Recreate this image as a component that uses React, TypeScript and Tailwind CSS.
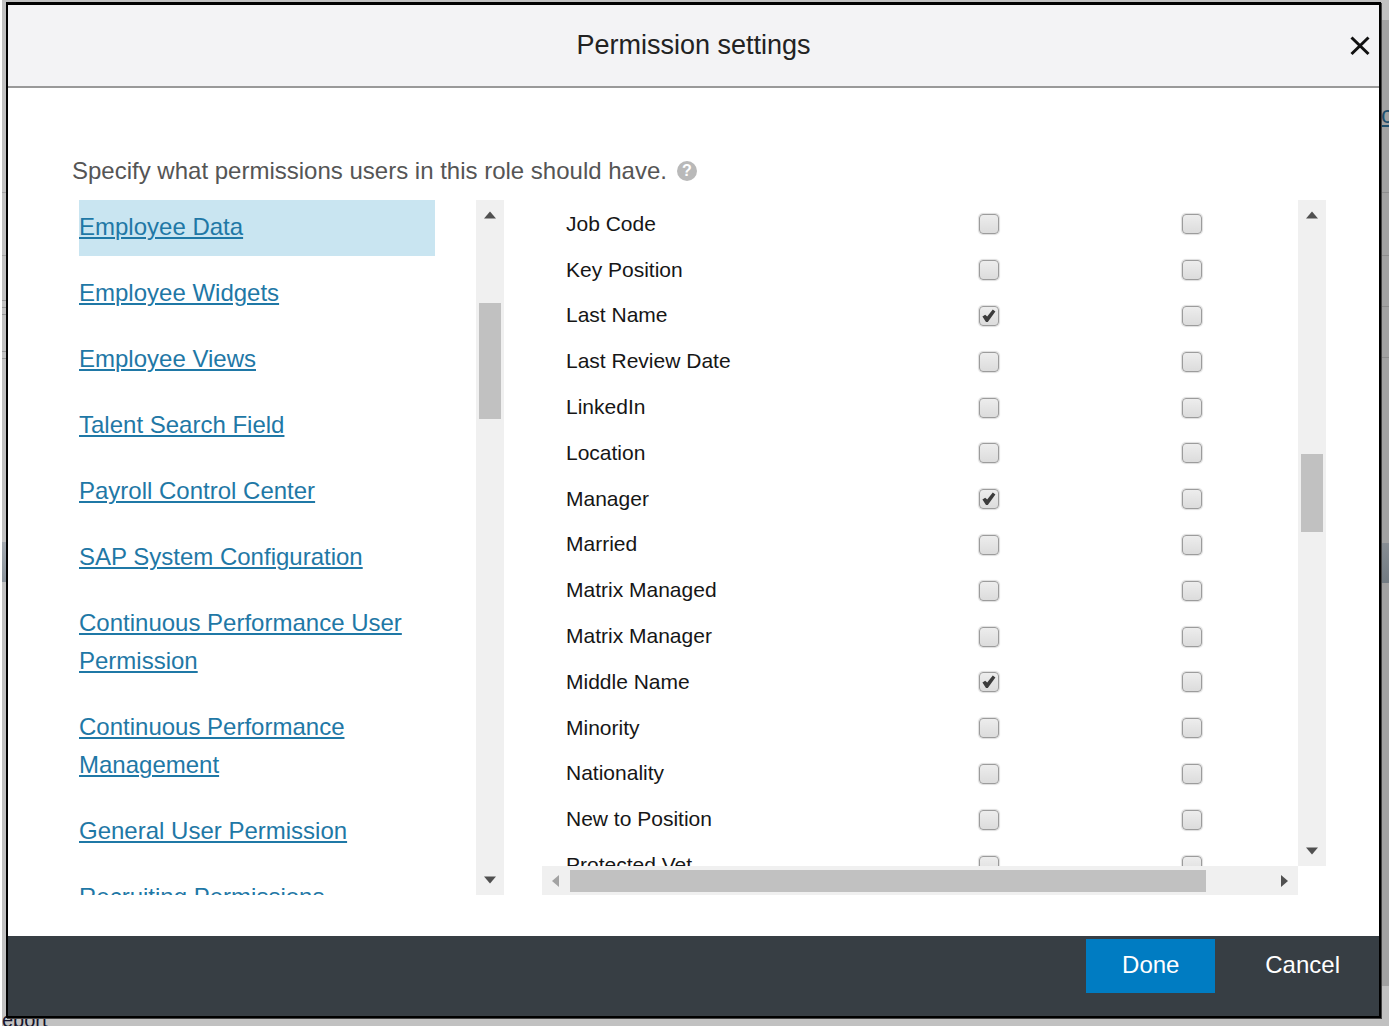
import { useState } from "react";

const categories = [
  "Employee Data",
  "Employee Widgets",
  "Employee Views",
  "Talent Search Field",
  "Payroll Control Center",
  "SAP System Configuration",
  "Continuous Performance User Permission",
  "Continuous Performance Management",
  "General User Permission",
  "Recruiting Permissions",
];

const fields = [
  { name: "Job Code", view: false },
  { name: "Key Position", view: false },
  { name: "Last Name", view: true },
  { name: "Last Review Date", view: false },
  { name: "LinkedIn", view: false },
  { name: "Location", view: false },
  { name: "Manager", view: true },
  { name: "Married", view: false },
  { name: "Matrix Managed", view: false },
  { name: "Matrix Manager", view: false },
  { name: "Middle Name", view: true },
  { name: "Minority", view: false },
  { name: "Nationality", view: false },
  { name: "New to Position", view: false },
  { name: "Protected Vet", view: false },
];

const arrowPaths = {
  up: "M8 5.5 14 12.5H2Z",
  down: "M2 3.5H14L8 10.5Z",
  left: "M11 2V14L4 8Z",
  right: "M5 2V14L12 8Z",
};

function ScrollArrow({ dir, muted = false }: { dir: keyof typeof arrowPaths; muted?: boolean }) {
  return (
    <button type="button" aria-label={`Scroll ${dir}`} className="grid size-7 shrink-0 place-items-center">
      <svg viewBox="0 0 16 16" className="size-4" fill={muted ? "#a3a3a3" : "#505050"}>
        <path d={arrowPaths[dir]} />
      </svg>
    </button>
  );
}

function CheckBox({ label, initial }: { label: string; initial: boolean }) {
  const [checked, setChecked] = useState(initial);
  return (
    <span className="relative inline-block size-5 align-middle">
      <input
        type="checkbox"
        aria-label={label}
        checked={checked}
        onChange={(e) => setChecked(e.target.checked)}
        className="block size-5 appearance-none rounded-[4px] border border-[#9c9c9c] bg-linear-to-b from-[#ededed] to-[#dcdcdc] shadow-[0_0_1px_1px_#00000022]"
      />
      {checked && (
        <svg viewBox="0 0 20 20" className="pointer-events-none absolute inset-0 size-5" fill="#3c3c3c">
          <path d="M3.4 10.6 6.2 8.8 8.2 10.6 13.8 3.6 16.4 5.4 8.8 16 7 16Z" />
        </svg>
      )}
    </span>
  );
}

function Backdrop() {
  return (
    <div aria-hidden="true" className="flex h-full border-l-2 border-white bg-[#c1c1c1]">
      <div className="flex w-4 flex-col">
        <div className="mt-48 h-px bg-[#a5a5a5]" />
        <div className="mt-[62px] h-px bg-[#a5a5a5]" />
        <div className="mt-11 h-px bg-[#999999]" />
        <div className="mt-1.5 h-px bg-[#999999]" />
        <div className="mt-1.5 h-px bg-[#999999]" />
        <div className="mt-9 h-px bg-[#999999]" />
        <div className="mt-1.5 h-px bg-[#999999]" />
        <div className="mt-[183px] h-10 bg-linear-to-b from-[#a3a9b0] to-[#8b949c]" />
        <div className="mt-auto h-4 w-16 text-xl leading-5 text-[#14142c]">eport</div>
      </div>
      <div className="mt-5 mb-10 ml-auto flex w-4 flex-col bg-[#a1a1a1]">
        <div className="mt-[83px] h-7 pl-2 text-2xl leading-6 text-[#1d4e6c] underline">c</div>
        <div className="mt-[61px] h-px bg-[#8c8c8c]" />
        <div className="mt-[62px] h-px bg-[#8c8c8c]" />
        <div className="mt-[50px] h-px bg-[#8c8c8c]" />
        <div className="mt-[50px] h-px bg-[#8c8c8c]" />
        <div className="mt-[185px] h-10 bg-linear-to-b from-[#878d93] to-[#727b82]" />
      </div>
    </div>
  );
}

export default function App() {
  const [selected, setSelected] = useState(0);
  return (
    <div className="relative h-screen overflow-hidden font-['Liberation_Sans',Arial,sans-serif]">
      <Backdrop />
      <div
        role="dialog"
        aria-modal="true"
        aria-labelledby="dialog-title"
        className="absolute inset-x-1.5 top-0.5 bottom-2 mr-0.5 flex flex-col border-2 border-t-3 border-black bg-white shadow-[1px_1px_0_#444444]"
      >
        <header className="relative flex h-[83px] shrink-0 items-center justify-center border-b-2 border-[#999999] bg-[#f3f3f5]">
          <h1 id="dialog-title" className="text-[27px] text-[#222222]">
            Permission settings
          </h1>
          <button type="button" aria-label="Close" className="absolute right-[7px] size-6">
            <svg viewBox="0 0 24 24" className="size-6" fill="none" stroke="#111111" strokeWidth="3">
              <path d="M3.5 3.5 20.5 20M20.5 3.5 3.5 20" />
            </svg>
          </button>
        </header>

        <main className="flex min-h-0 flex-1 flex-col pt-[65px] pr-[53px] pb-[41px] pl-16">
          <div className="flex h-9 shrink-0 items-center gap-2.5 text-2xl text-[#555555]">
            <p>Specify what permissions users in this role should have.</p>
            <button
              type="button"
              aria-label="Help"
              className="grid size-5 place-items-center rounded-full bg-[#b9b9b9] text-base leading-none font-bold text-white"
            >
              ?
            </button>
          </div>

          <div className="mt-[11px] flex min-h-0 flex-1 pl-[7px]">
            <nav aria-label="Permission categories" className="w-[356px] shrink-0 overflow-hidden">
              <ul className="flex flex-col gap-2.5">
                {categories.map((name, i) => (
                  <li
                    key={name}
                    className={i === selected ? "bg-[#c9e5f1] pt-2 pb-2.5" : "pt-2 pb-2.5"}
                  >
                    <a
                      href="#"
                      onClick={(e) => {
                        e.preventDefault();
                        setSelected(i);
                      }}
                      className="block text-2xl leading-[38px] text-[#1f78a6] underline decoration-2 underline-offset-2"
                    >
                      {name}
                    </a>
                  </li>
                ))}
              </ul>
            </nav>

            <div className="ml-[41px] flex w-7 shrink-0 flex-col items-center bg-[#f0f0f0]">
              <ScrollArrow dir="up" />
              <div className="mt-[75px] mb-auto h-[116px] w-[22px] bg-[#c1c1c1]" />
              <ScrollArrow dir="down" />
            </div>

            <div className="ml-[38px] flex min-w-0 flex-1 flex-col">
              <div className="min-h-0 flex-1 overflow-hidden">
                <table className="h-[687px] w-full table-fixed text-[21px] leading-6 text-[#161616]">
                  <colgroup>
                    <col />
                    <col className="w-[202px]" />
                    <col className="w-[204px]" />
                    <col className="w-1" />
                  </colgroup>
                  <tbody>
                    {fields.map((field) => (
                      <tr key={field.name}>
                        <th scope="row" className="pt-0.5 pl-6 text-left font-normal">
                          {field.name}
                        </th>
                        <td className="text-center">
                          <CheckBox label={`${field.name}: view`} initial={field.view} />
                        </td>
                        <td className="text-center">
                          <CheckBox label={`${field.name}: edit`} initial={false} />
                        </td>
                        <td />
                      </tr>
                    ))}
                  </tbody>
                </table>
              </div>
              <div className="flex h-[29px] shrink-0 items-center bg-[#f0f0f0]">
                <ScrollArrow dir="left" muted />
                <div className="mr-16 h-[22px] flex-1 bg-[#c1c1c1]" />
                <ScrollArrow dir="right" />
              </div>
            </div>

            <div className="mb-[29px] flex w-7 shrink-0 flex-col items-center bg-[#f0f0f0]">
              <ScrollArrow dir="up" />
              <div className="mt-[226px] mb-auto h-[78px] w-[22px] bg-[#c1c1c1]" />
              <ScrollArrow dir="down" />
            </div>
          </div>
        </main>

        <footer className="flex h-20 shrink-0 items-start justify-end bg-[#373e44] pt-[3px] pr-[39px] text-2xl text-white">
          <button type="button" className="h-[54px] w-[129px] bg-[#007cc2] pb-0.5">
            Done
          </button>
          <button type="button" className="ml-[50px] h-[54px] pb-0.5">
            Cancel
          </button>
        </footer>
      </div>
    </div>
  );
}
